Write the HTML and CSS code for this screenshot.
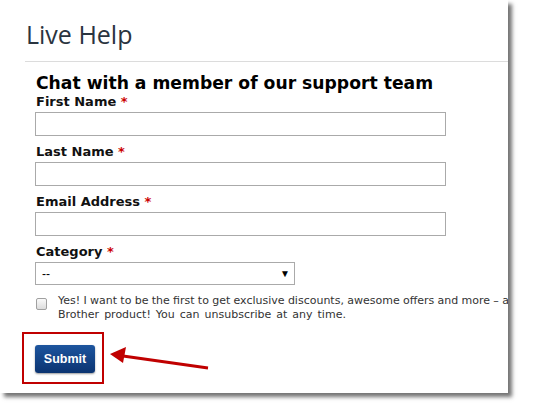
FILE: index.html
```html
<!DOCTYPE html>
<html>
<head>
<meta charset="utf-8">
<link rel="stylesheet" href="styles.css">
</head>
<body>
<div class="panel">
  <h1 class="title">Live Help</h1>
  <div class="rule"></div>
  <form class="form">
    <h2 class="heading">Chat with a member of our support team</h2>
    <div class="field">
      <label class="label">First Name <span class="req">*</span></label>
      <input class="input" type="text">
    </div>
    <div class="field">
      <label class="label">Last Name <span class="req">*</span></label>
      <input class="input" type="text">
    </div>
    <div class="field">
      <label class="label">Email Address <span class="req">*</span></label>
      <input class="input" type="text">
    </div>
    <div class="field field-last">
      <label class="label">Category <span class="req">*</span></label>
      <div class="select"><span>--</span><span class="caret">▼</span></div>
    </div>
    <div class="optin">
      <span class="checkbox"></span>
      <p class="optin-text"><span class="line1">Yes! I want to be the first to get exclusive discounts, awesome offers and more – and</span><br><span class="line2">Brother product! You can unsubscribe at any time.</span></p>
    </div>
    <div class="submit-row">
      <div class="highlight">
        <button class="submit" type="button">Submit</button>
      </div>
      <svg class="arrow" width="110" height="30" viewBox="0 0 110 30">
        <line x1="99" y1="22" x2="14" y2="10" stroke="#c00000" stroke-width="3"/>
        <polygon points="1,8 17,1 14,17" fill="#c00000"/>
      </svg>
    </div>
  </form>
</div>
</body>
</html>
```
FILE: styles.css
```css
html, body {
  margin: 0;
  padding: 0;
  background: #fff;
}
body {
  width: 545px;
  height: 409px;
  overflow: hidden;
}
.panel {
  width: 508px;
  height: 393px;
  background: #fff;
  box-shadow: 4px 4px 4px rgba(0,0,0,0.55);
  overflow: hidden;
  position: relative;
}
.title {
  margin: 0;
  padding: 19px 0 0 26px;
  font-family: "Open Sans", "DejaVu Sans", sans-serif;
  font-weight: 400;
  font-size: 25px;
  line-height: 30px;
  color: #2a3440;
}
.rule {
  margin: 12px 0 0 25px;
  height: 1px;
  background: #dcdcdc;
}
.form {
  padding: 10px 0 0 36px;
  font-family: "DejaVu Sans", Verdana, sans-serif;
}
.heading {
  margin: 0;
  font-size: 17.2px;
  font-weight: bold;
  line-height: 22px;
  color: #000;
  white-space: nowrap;
}
.field {
  display: flex;
  flex-direction: column;
  margin-bottom: 8px;
}
.field-last {
  margin-bottom: 9px;
}
.label {
  font-size: 13px;
  font-weight: bold;
  line-height: 16px;
  color: #111;
  margin-bottom: 2px;
}
.req {
  color: #c00;
}
.input {
  box-sizing: border-box;
  width: 411px;
  height: 24px;
  margin: 0 0 0 -1px;
  border: 1px solid #aaa;
  background: #fff;
  padding: 0;
}
.select {
  box-sizing: border-box;
  width: 260px;
  height: 23px;
  margin-left: -1px;
  border: 1px solid #aaa;
  display: flex;
  align-items: center;
  justify-content: space-between;
  padding: 0 4px 0 6px;
  font-family: "Liberation Sans", Arial, sans-serif;
  font-size: 12px;
  color: #000;
}
.caret {
  font-size: 10px;
}
.optin {
  display: flex;
  gap: 11px;
  width: 540px;
}
.checkbox {
  flex: none;
  box-sizing: border-box;
  width: 11px;
  height: 12px;
  margin-top: 4px;
  border: 1px solid #a0a0a0;
  border-radius: 2px;
  background: linear-gradient(#fafafa, #dcdcdc);
}
.optin-text {
  margin: 0;
  font-size: 11px;
  line-height: 14px;
  color: #333;
  white-space: nowrap;
}
.line1 {
  word-spacing: -0.2px;
}
.line2 {
  word-spacing: 1.5px;
}
.submit-row {
  display: flex;
  align-items: flex-start;
  margin-top: 10px;
  margin-left: -14px;
}
.highlight {
  box-sizing: border-box;
  width: 82px;
  height: 52px;
  border: 2px solid #c00000;
  padding: 11px 0 0 11px;
}
.submit {
  width: 60px;
  height: 28px;
  border: none;
  border-radius: 3px;
  background: linear-gradient(#1d559e, #0b3471);
  box-shadow: 0 1px 2px rgba(0,0,0,0.4);
  color: #fff;
  font-family: "Liberation Sans", Arial, sans-serif;
  font-weight: bold;
  font-size: 12.5px;
  padding: 0;
}
.arrow {
  margin-top: 14px;
  margin-left: 5px;
}
```
